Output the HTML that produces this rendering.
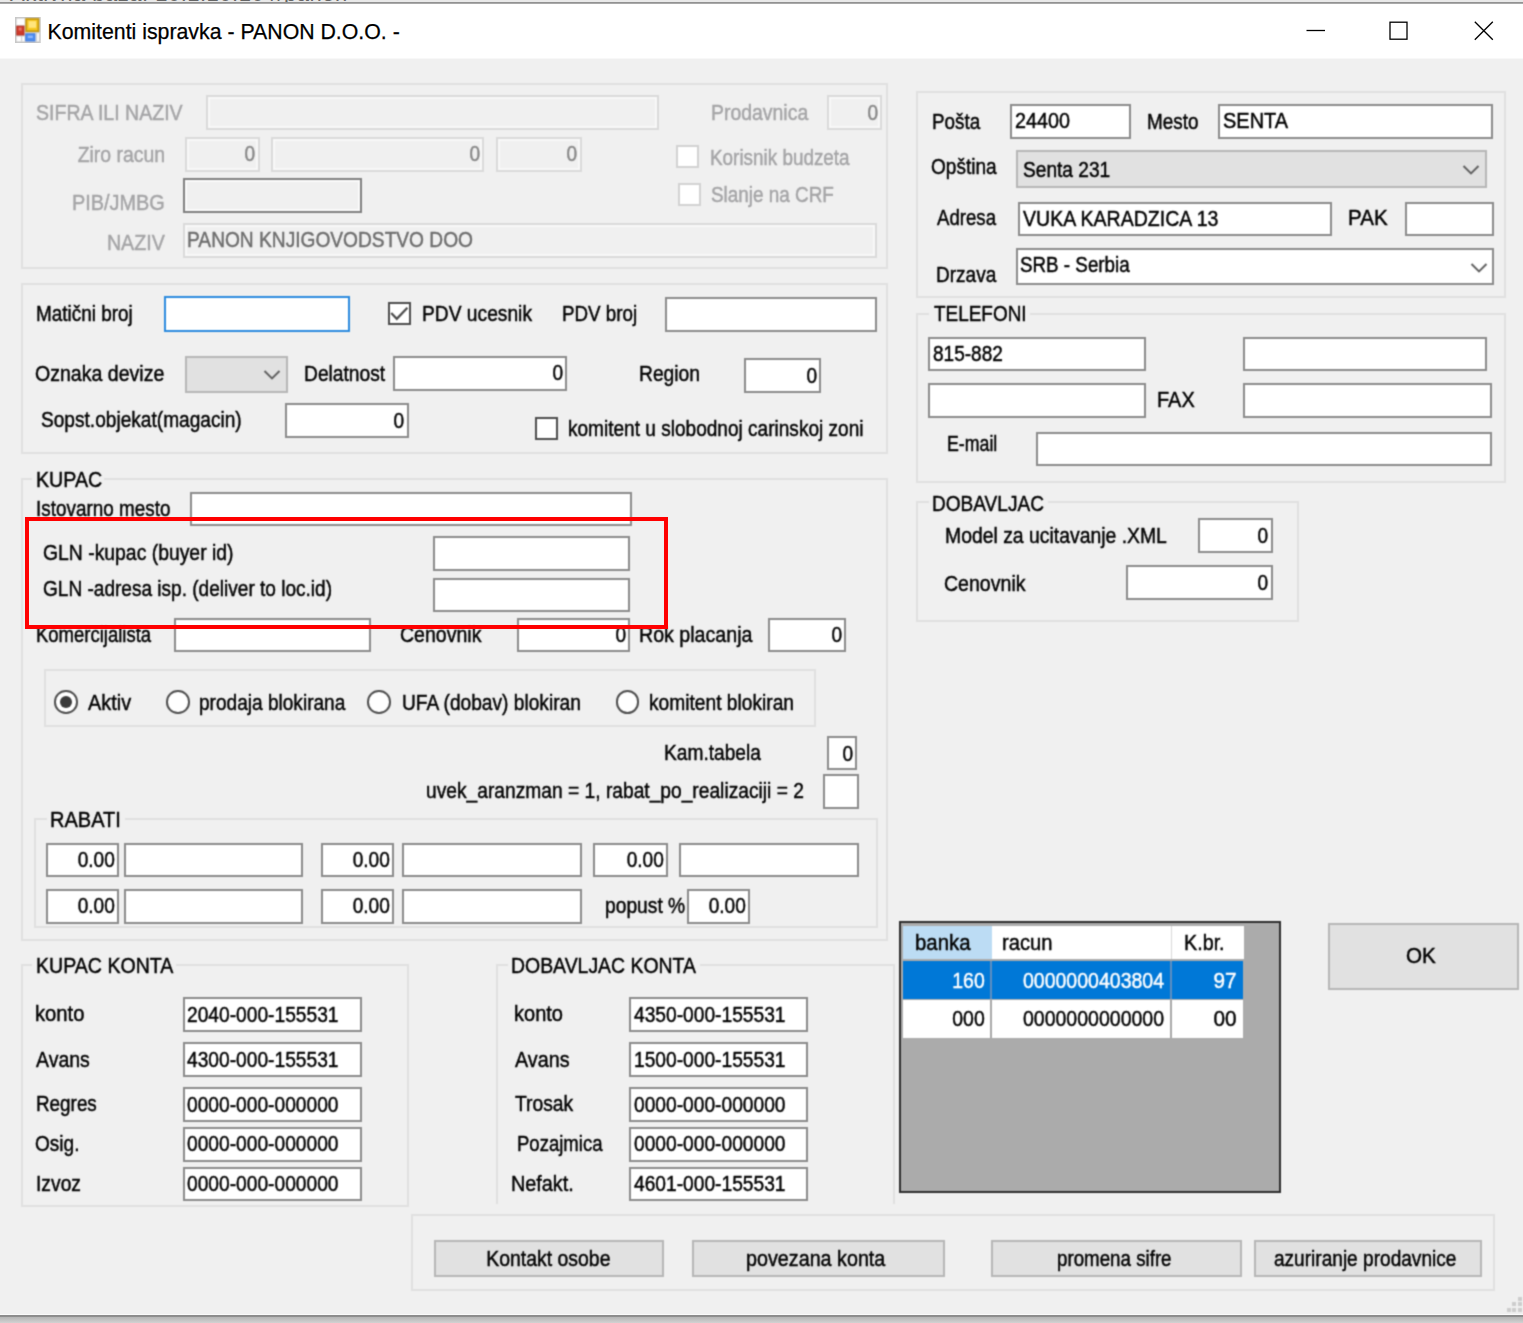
<!DOCTYPE html>
<html lang="sr"><head><meta charset="utf-8"><title>Komitenti ispravka - PANON D.O.O. -</title>
<style>
html,body{margin:0;padding:0}
body{width:1523px;height:1323px;overflow:hidden;position:relative;background:#f0f0f0;font-family:"Liberation Sans",sans-serif}
#top{position:absolute;left:0;top:0;width:1523px;height:3px;background:#e9e9e9;overflow:hidden}
#top span{position:absolute;left:10px;top:-18.3px;font-size:22px;line-height:24px;color:#666;white-space:pre;letter-spacing:.5px}
#topline{position:absolute;left:0;top:2px;width:1523px;height:2px;background:linear-gradient(#9a9a9a,#8a8a8a 50%,#c8c8c8)}
#title{position:absolute;left:0;top:4px;width:1523px;height:54px;background:#fff}
#tl2{position:absolute;left:0;top:58px;width:1523px;height:1px;background:#f8f8f8}
#title .cap{position:absolute;left:47.5px;top:15px;font-size:21.3px;line-height:26px;color:#000;white-space:pre;-webkit-text-stroke:.25px #000}
#in{position:absolute;left:0;top:-58px;width:1523px;height:1323px}
#client{position:absolute;left:0;top:58px;width:1523px;height:1257px;overflow:hidden;background:#f0f0f0;filter:url(#soft)}
.ab{position:absolute}
.g{position:absolute;box-sizing:border-box;border:2px solid #e0e0e0}
.gap{position:absolute;background:#f0f0f0}
.t{position:absolute;white-space:pre;font-size:22px;line-height:24px;color:#000;transform-origin:0 0;-webkit-text-stroke:.45px currentColor}
.t.r{transform-origin:100% 0}
.t.c{transform-origin:50% 0}
.tb{position:absolute;box-sizing:border-box;background:#fff;border:2px solid #8b8b8b}
.tbf{position:absolute;box-sizing:border-box;background:#fff;border:2px solid #2a8ade}
.db{position:absolute;box-sizing:border-box;background:#f0f0f0;border:2px solid #dadada;box-shadow:inset 0 0 0 2px #f8f8f8}
.pb{position:absolute;box-sizing:border-box;background:#f0f0f0;border:2px solid #808080;box-shadow:inset 0 0 0 2px #fafafa}
.cg{position:absolute;box-sizing:border-box;background:#e1e1e1;border:2px solid #b6b6b6}
.bt{position:absolute;box-sizing:border-box;background:#e1e1e1;border:2px solid #b6b6b6}
.cb{position:absolute;box-sizing:border-box;background:#fff;border:2px solid #4d4d4d}
.cbd{position:absolute;box-sizing:border-box;background:#fff;border:2px solid #d2d2d2}
.rd{position:absolute;box-sizing:border-box;background:#fff;border:2px solid #4d4d4d;border-radius:50%}
.rd i{position:absolute;left:50%;top:50%;width:12.4px;height:12.4px;margin:-6.2px 0 0 -6.2px;border-radius:50%;background:#3a3a3a}
.red{position:absolute;box-sizing:border-box;border:4px solid #f00}
.grid{position:absolute;box-sizing:border-box;background:#ababab;border:2px solid #2e2e2e}
#bot1{position:absolute;left:0;top:1314px;width:1523px;height:1px;background:#fafafa}
#bot2{position:absolute;left:0;top:1315px;width:1523px;height:8px;background:linear-gradient(#8a8a8a 0,#8e8e8e 22%,#b6b6b6 30%,#d2d2d2 100%)}
</style></head><body>
<div id="top"><span>Aktivna baza: 10.1.10.10 //panon</span></div><div id="topline"></div>
<div id="title"><svg class="ab" style="left:15px;top:13px;filter:url(#soft)" width="26" height="26" viewBox="0 0 26 26">
<rect x="0.8" y="0.8" width="24" height="24.4" fill="#fff" stroke="#c6c6c6" stroke-width="1.6"/>
<path d="M10.2 1V25M1 8.6H10M1 18.8H10M6.6 19V25M21.6 15V25M10 15.6H25" stroke="#d2d2d2" stroke-width="1.3" fill="none"/>
<rect x="11.2" y="2" width="12.2" height="12.2" fill="#f7c822" stroke="#c79a10" stroke-width="1.8"/>
<rect x="13.6" y="4.2" width="7.6" height="6.6" fill="#ffe57e"/>
<rect x="1.8" y="9.2" width="7.2" height="8.8" fill="#cf3b2b" stroke="#b22c1e" stroke-width="1"/>
<rect x="3.6" y="10.6" width="3" height="3" fill="#e8756a"/>
<rect x="10.8" y="16.8" width="9.2" height="7.2" fill="#4c8df0" stroke="#3f78dc" stroke-width="1"/>
<rect x="12.8" y="18.6" width="5" height="2.4" fill="#8db6ff"/>
</svg><span class="cap">Komitenti ispravka - PANON D.O.O. -</span></div>
<svg class="ab" style="left:1300px;top:14px" width="200" height="34" viewBox="1300 14 200 34">
<path d="M1306.5 30.5H1325" stroke="#000" stroke-width="1.3" fill="none"/>
<rect x="1390" y="22.2" width="17" height="17" fill="none" stroke="#000" stroke-width="1.3"/>
<path d="M1474.8 21.8L1492.8 39.8M1492.8 21.8L1474.8 39.8" stroke="#000" stroke-width="1.3" fill="none"/>
</svg>
<svg width="0" height="0" style="position:absolute"><defs><filter id="soft" x="0" y="0" width="100%" height="100%" color-interpolation-filters="sRGB"><feConvolveMatrix order="3" kernelMatrix="0.04 0.12 0.04 0.12 0.36 0.12 0.04 0.12 0.04" divisor="1" edgeMode="duplicate" preserveAlpha="false"/></filter></defs></svg>
<div id="client"><div id="in">
<div class="g" style="left:21px;top:83px;width:867px;height:186px;"></div>
<div class="db" style="left:206px;top:95px;width:453px;height:35px;"></div>
<div class="db" style="left:185px;top:137px;width:75px;height:35px;"></div>
<div class="db" style="left:271px;top:137px;width:213px;height:35px;"></div>
<div class="db" style="left:496px;top:137px;width:86px;height:35px;"></div>
<div class="pb" style="left:183px;top:178px;width:179px;height:35px;"></div>
<div class="db" style="left:183px;top:223px;width:694px;height:35px;"></div>
<div class="db" style="left:827px;top:95px;width:55px;height:35px;"></div>
<div class="cbd" style="left:676px;top:145px;width:23px;height:23px;"></div>
<div class="cbd" style="left:678px;top:183px;width:23px;height:23px;"></div>
<div class="g" style="left:21px;top:283px;width:867px;height:171px;"></div>
<div class="tbf" style="left:164px;top:296px;width:186px;height:36px;"></div>
<div class="cb" style="left:388px;top:302px;width:23px;height:23px"><svg width="19" height="19" viewBox="0 0 19 19" style="position:absolute;left:0;top:0"><path d="M1.2 9 L6.8 14.8 L17.4 3.8" fill="none" stroke="#4a4a4a" stroke-width="2.2"/></svg></div>
<div class="tb" style="left:665px;top:297px;width:212px;height:35px;"></div>
<div class="cg" style="left:185px;top:356px;width:103px;height:37px;"></div>
<svg class="ab" style="left:262.0px;top:368.3px" width="20" height="14" viewBox="0 0 20 14"><path d="M2.5 3 L10 10.4 L17.5 3" fill="none" stroke="#606060" stroke-width="2"/></svg>
<div class="tb" style="left:393px;top:356px;width:174px;height:35px;"></div>
<div class="tb" style="left:744px;top:358px;width:77px;height:35px;"></div>
<div class="tb" style="left:285px;top:403px;width:124px;height:35px;"></div>
<div class="cb" style="left:535px;top:417px;width:23px;height:23px;"></div>
<div class="g" style="left:21px;top:478px;width:867px;height:463px;"></div>
<div class="gap" style="left:32px;top:477px;width:72px;height:4px"></div>
<div class="tb" style="left:190px;top:492px;width:442px;height:34px;"></div>
<div class="tb" style="left:433px;top:536px;width:197px;height:35px;"></div>
<div class="tb" style="left:433px;top:578px;width:197px;height:34px;"></div>
<div class="tb" style="left:174px;top:618px;width:197px;height:34px;"></div>
<div class="tb" style="left:517px;top:618px;width:113px;height:34px;"></div>
<div class="tb" style="left:768px;top:618px;width:78px;height:34px;"></div>
<div class="g" style="left:44px;top:669px;width:772px;height:58px;"></div>
<div class="rd" style="left:54.3px;top:690.2px;width:23.6px;height:23.6px"><i></i></div>
<div class="rd" style="left:166.1px;top:690.2px;width:23.6px;height:23.6px"></div>
<div class="rd" style="left:367.4px;top:690.2px;width:23.6px;height:23.6px"></div>
<div class="rd" style="left:615.8px;top:690.2px;width:23.6px;height:23.6px"></div>
<div class="tb" style="left:827px;top:736px;width:30px;height:34px;"></div>
<div class="tb" style="left:823px;top:774px;width:36px;height:35px;"></div>
<div class="g" style="left:34px;top:818px;width:844px;height:110px;"></div>
<div class="gap" style="left:47px;top:817px;width:78px;height:4px"></div>
<div class="tb" style="left:46px;top:843px;width:73px;height:34px;"></div>
<div class="tb" style="left:124px;top:843px;width:179px;height:34px;"></div>
<div class="tb" style="left:321px;top:843px;width:73px;height:34px;"></div>
<div class="tb" style="left:402px;top:843px;width:180px;height:34px;"></div>
<div class="tb" style="left:46px;top:889px;width:73px;height:35px;"></div>
<div class="tb" style="left:124px;top:889px;width:179px;height:35px;"></div>
<div class="tb" style="left:321px;top:889px;width:73px;height:35px;"></div>
<div class="tb" style="left:402px;top:889px;width:180px;height:35px;"></div>
<div class="tb" style="left:593px;top:843px;width:75px;height:34px;"></div>
<div class="tb" style="left:679px;top:843px;width:180px;height:34px;"></div>
<div class="tb" style="left:687px;top:889px;width:63px;height:35px;"></div>
<div class="g" style="left:21px;top:964px;width:388px;height:243px;"></div>
<div class="gap" style="left:32px;top:963px;width:144px;height:4px"></div>
<div class="tb" style="left:183px;top:997px;width:179px;height:35px;"></div>
<div class="tb" style="left:183px;top:1042px;width:179px;height:35px;"></div>
<div class="tb" style="left:183px;top:1087px;width:179px;height:35px;"></div>
<div class="tb" style="left:183px;top:1127px;width:179px;height:35px;"></div>
<div class="tb" style="left:183px;top:1167px;width:179px;height:34px;"></div>
<div class="g" style="left:496px;top:964px;width:399px;height:240px;border-bottom:none;"></div>
<div class="gap" style="left:508px;top:963px;width:192px;height:4px"></div>
<div class="tb" style="left:629px;top:997px;width:179px;height:35px;"></div>
<div class="tb" style="left:629px;top:1042px;width:179px;height:35px;"></div>
<div class="tb" style="left:629px;top:1087px;width:179px;height:35px;"></div>
<div class="tb" style="left:629px;top:1127px;width:179px;height:35px;"></div>
<div class="tb" style="left:629px;top:1167px;width:179px;height:34px;"></div>
<div class="g" style="left:916px;top:91px;width:590px;height:207px;"></div>
<div class="tb" style="left:1010px;top:104px;width:121px;height:35px;"></div>
<div class="tb" style="left:1218px;top:104px;width:275px;height:35px;"></div>
<div class="cg" style="left:1016px;top:150px;width:471px;height:38px;"></div>
<svg class="ab" style="left:1461.2px;top:163.0px" width="20" height="14" viewBox="0 0 20 14"><path d="M2.5 3 L10 10.4 L17.5 3" fill="none" stroke="#606060" stroke-width="2"/></svg>
<div class="tb" style="left:1018px;top:202px;width:314px;height:34px;"></div>
<div class="tb" style="left:1405px;top:202px;width:89px;height:34px;"></div>
<div class="tb" style="left:1016px;top:248px;width:478px;height:37px;"></div>
<svg class="ab" style="left:1468.6px;top:260.5px" width="20" height="14" viewBox="0 0 20 14"><path d="M2.5 3 L10 10.4 L17.5 3" fill="none" stroke="#606060" stroke-width="2"/></svg>
<div class="g" style="left:916px;top:313px;width:590px;height:170px;"></div>
<div class="gap" style="left:929px;top:312px;width:101px;height:4px"></div>
<div class="tb" style="left:928px;top:337px;width:218px;height:34px;"></div>
<div class="tb" style="left:1243px;top:337px;width:244px;height:34px;"></div>
<div class="tb" style="left:928px;top:383px;width:218px;height:35px;"></div>
<div class="tb" style="left:1243px;top:383px;width:249px;height:35px;"></div>
<div class="tb" style="left:1036px;top:432px;width:456px;height:34px;"></div>
<div class="g" style="left:916px;top:501px;width:383px;height:121px;"></div>
<div class="gap" style="left:929px;top:500px;width:119px;height:4px"></div>
<div class="tb" style="left:1198px;top:518px;width:75px;height:35px;"></div>
<div class="tb" style="left:1126px;top:565px;width:147px;height:35px;"></div>
<div class="grid" style="left:899px;top:921px;width:382px;height:272px"></div>
<div class="ab" style="left:902.5px;top:926px;width:89.5px;height:33px;background:#bcdcf4"></div>
<div class="ab" style="left:992px;top:926px;width:179px;height:33px;background:#fff"></div>
<div class="ab" style="left:1171px;top:926px;width:73px;height:33px;background:#fff;border-left:1px solid #d8d8d8;box-sizing:border-box"></div>
<div class="ab" style="left:902.5px;top:961px;width:340.5px;height:38px;background:#0078d7"></div>
<div class="ab" style="left:902.5px;top:1000px;width:340.5px;height:38px;background:#fff"></div>
<div class="ab" style="left:990px;top:961px;width:2px;height:38px;background:#5f8fc0"></div>
<div class="ab" style="left:990px;top:1000px;width:2px;height:38px;background:#a8a8a8"></div>
<div class="ab" style="left:1170px;top:961px;width:2px;height:38px;background:#5f8fc0"></div>
<div class="ab" style="left:1170px;top:1000px;width:2px;height:38px;background:#a8a8a8"></div>
<div class="bt" style="left:1328px;top:923px;width:191px;height:67px;"></div>
<div class="g" style="left:411px;top:1214px;width:1084px;height:77px;"></div>
<div class="bt" style="left:434px;top:1240px;width:230px;height:37px;"></div>
<div class="bt" style="left:692px;top:1240px;width:253px;height:37px;"></div>
<div class="bt" style="left:991px;top:1240px;width:251px;height:37px;"></div>
<div class="bt" style="left:1254px;top:1240px;width:228px;height:37px;"></div>
<div class="ab" style="left:1518px;top:1297px;width:4px;height:4px;background:#cdcdcd"></div>
<div class="ab" style="left:1512px;top:1302px;width:4px;height:4px;background:#cdcdcd"></div>
<div class="ab" style="left:1518px;top:1302px;width:4px;height:4px;background:#cdcdcd"></div>
<div class="ab" style="left:1507px;top:1308px;width:4px;height:4px;background:#cdcdcd"></div>
<div class="ab" style="left:1512px;top:1308px;width:4px;height:4px;background:#cdcdcd"></div>
<div class="ab" style="left:1518px;top:1308px;width:4px;height:4px;background:#cdcdcd"></div>
<span class="t" style="left:36.0px;top:101.4px;color:#a4a4a6;transform:scaleX(0.8882)">SIFRA ILI NAZIV</span>
<span class="t r" style="right:1358.4px;top:142.8px;color:#a4a4a6;transform:scaleX(0.8824)">Ziro racun</span>
<span class="t r" style="right:1358.4px;top:190.7px;color:#a4a4a6;transform:scaleX(0.9037)">PIB/JMBG</span>
<span class="t r" style="right:1358.4px;top:231.3px;color:#a4a4a6;transform:scaleX(0.8936)">NAZIV</span>
<span class="t" style="left:710.8px;top:100.9px;color:#a4a4a6;transform:scaleX(0.8830)">Prodavnica</span>
<span class="t" style="left:709.6px;top:145.8px;color:#a4a4a6;transform:scaleX(0.8583)">Korisnik budzeta</span>
<span class="t" style="left:711.3px;top:183.1px;color:#a4a4a6;transform:scaleX(0.8590)">Slanje na CRF</span>
<span class="t r" style="right:1267.5px;top:142.1px;color:#868686;transform:scaleX(0.8680)">0</span>
<span class="t r" style="right:1042.7px;top:142.1px;color:#868686;transform:scaleX(0.8680)">0</span>
<span class="t r" style="right:945.4px;top:142.1px;color:#868686;transform:scaleX(0.8680)">0</span>
<span class="t" style="left:187.4px;top:228.2px;color:#6d6d6d;transform:scaleX(0.8708)">PANON KNJIGOVODSTVO DOO</span>
<span class="t r" style="right:645.2px;top:100.7px;color:#868686;transform:scaleX(0.8680)">0</span>
<span class="t" style="left:36.0px;top:301.9px;transform:scaleX(0.8606)">Matični broj</span>
<span class="t" style="left:421.6px;top:302.1px;transform:scaleX(0.8733)">PDV ucesnik</span>
<span class="t" style="left:561.6px;top:302.1px;transform:scaleX(0.8541)">PDV broj</span>
<span class="t" style="left:34.7px;top:362.2px;transform:scaleX(0.8885)">Oznaka devize</span>
<span class="t" style="left:303.9px;top:362.2px;transform:scaleX(0.8736)">Delatnost</span>
<span class="t r" style="right:960.1px;top:361.1px;transform:scaleX(0.8680)">0</span>
<span class="t" style="left:639.0px;top:362.2px;transform:scaleX(0.8749)">Region</span>
<span class="t r" style="right:706.1px;top:363.6px;transform:scaleX(0.8680)">0</span>
<span class="t" style="left:41.4px;top:408.4px;transform:scaleX(0.8684)">Sopst.objekat(magacin)</span>
<span class="t r" style="right:1118.5px;top:408.5px;transform:scaleX(0.8680)">0</span>
<span class="t" style="left:567.9px;top:417.1px;transform:scaleX(0.8661)">komitent u slobodnoj carinskoj zoni</span>
<span class="t" style="left:35.8px;top:468.4px;transform:scaleX(0.8925)">KUPAC</span>
<span class="t" style="left:35.9px;top:497.0px;transform:scaleX(0.8587)">Istovarno mesto</span>
<span class="t" style="left:43.4px;top:541.1px;transform:scaleX(0.8802)">GLN -kupac (buyer id)</span>
<span class="t" style="left:43.4px;top:577.3px;transform:scaleX(0.8658)">GLN -adresa isp. (deliver to loc.id)</span>
<span class="t" style="left:35.9px;top:622.5px;transform:scaleX(0.8405)">Komercijalista</span>
<span class="t" style="left:400.2px;top:622.5px;transform:scaleX(0.8875)">Cenovnik</span>
<span class="t r" style="right:897.2px;top:623.1px;transform:scaleX(0.8680)">0</span>
<span class="t" style="left:639.0px;top:622.5px;transform:scaleX(0.8916)">Rok placanja</span>
<span class="t r" style="right:681.1px;top:623.1px;transform:scaleX(0.8680)">0</span>
<span class="t" style="left:87.7px;top:691.0px;transform:scaleX(0.9038)">Aktiv</span>
<span class="t" style="left:198.6px;top:691.0px;transform:scaleX(0.8668)">prodaja blokirana</span>
<span class="t" style="left:402.0px;top:691.0px;transform:scaleX(0.8708)">UFA (dobav) blokiran</span>
<span class="t" style="left:648.5px;top:691.0px;transform:scaleX(0.8719)">komitent blokiran</span>
<span class="t" style="left:664.2px;top:740.9px;transform:scaleX(0.8706)">Kam.tabela</span>
<span class="t r" style="right:669.9px;top:741.5px;transform:scaleX(0.8680)">0</span>
<span class="t" style="left:426.4px;top:779.1px;transform:scaleX(0.8729)">uvek_aranzman = 1, rabat_po_realizaciji = 2</span>
<span class="t" style="left:50.1px;top:808.3px;transform:scaleX(0.9097)">RABATI</span>
<span class="t r" style="right:1408.2px;top:848.0px;transform:scaleX(0.8680)">0.00</span>
<span class="t r" style="right:1133.0px;top:848.0px;transform:scaleX(0.8680)">0.00</span>
<span class="t r" style="right:1408.2px;top:894.2px;transform:scaleX(0.8680)">0.00</span>
<span class="t r" style="right:1133.0px;top:894.2px;transform:scaleX(0.8680)">0.00</span>
<span class="t r" style="right:859.0px;top:848.0px;transform:scaleX(0.8680)">0.00</span>
<span class="t" style="left:604.8px;top:894.3px;transform:scaleX(0.8743)">popust %</span>
<span class="t r" style="right:776.7px;top:894.2px;transform:scaleX(0.8680)">0.00</span>
<span class="t" style="left:35.9px;top:954.2px;transform:scaleX(0.8897)">KUPAC KONTA</span>
<span class="t" style="left:34.7px;top:1002.4px;transform:scaleX(0.9196)">konto</span>
<span class="t" style="left:187.4px;top:1002.6px;transform:scaleX(0.8721)">2040-000-155531</span>
<span class="t" style="left:35.9px;top:1047.6px;transform:scaleX(0.8856)">Avans</span>
<span class="t" style="left:187.4px;top:1047.8px;transform:scaleX(0.8721)">4300-000-155531</span>
<span class="t" style="left:35.9px;top:1092.3px;transform:scaleX(0.8573)">Regres</span>
<span class="t" style="left:187.4px;top:1092.5px;transform:scaleX(0.8721)">0000-000-000000</span>
<span class="t" style="left:34.7px;top:1132.2px;transform:scaleX(0.8664)">Osig.</span>
<span class="t" style="left:187.4px;top:1132.4px;transform:scaleX(0.8721)">0000-000-000000</span>
<span class="t" style="left:35.9px;top:1172.1px;transform:scaleX(0.8762)">Izvoz</span>
<span class="t" style="left:187.4px;top:1172.3px;transform:scaleX(0.8721)">0000-000-000000</span>
<span class="t" style="left:511.2px;top:954.2px;transform:scaleX(0.8833)">DOBAVLJAC KONTA</span>
<span class="t" style="left:513.7px;top:1002.4px;transform:scaleX(0.9103)">konto</span>
<span class="t" style="left:633.8px;top:1002.6px;transform:scaleX(0.8721)">4350-000-155531</span>
<span class="t" style="left:514.5px;top:1047.6px;transform:scaleX(0.8971)">Avans</span>
<span class="t" style="left:633.8px;top:1047.8px;transform:scaleX(0.8721)">1500-000-155531</span>
<span class="t" style="left:515.0px;top:1092.3px;transform:scaleX(0.8762)">Trosak</span>
<span class="t" style="left:633.8px;top:1092.5px;transform:scaleX(0.8721)">0000-000-000000</span>
<span class="t" style="left:516.7px;top:1132.2px;transform:scaleX(0.8425)">Pozajmica</span>
<span class="t" style="left:633.8px;top:1132.4px;transform:scaleX(0.8721)">0000-000-000000</span>
<span class="t" style="left:511.2px;top:1172.1px;transform:scaleX(0.9010)">Nefakt.</span>
<span class="t" style="left:633.8px;top:1172.3px;transform:scaleX(0.8721)">4601-000-155531</span>
<span class="t" style="left:932.4px;top:109.6px;transform:scaleX(0.8567)">Pošta</span>
<span class="t" style="left:1015.0px;top:109.4px;transform:scaleX(0.8989)">24400</span>
<span class="t" style="left:1147.0px;top:109.6px;transform:scaleX(0.8595)">Mesto</span>
<span class="t" style="left:1222.7px;top:109.4px;transform:scaleX(0.9077)">SENTA</span>
<span class="t" style="left:931.2px;top:154.5px;transform:scaleX(0.8664)">Opština</span>
<span class="t" style="left:1022.7px;top:158.1px;transform:scaleX(0.8693)">Senta 231</span>
<span class="t" style="left:937.4px;top:206.4px;transform:scaleX(0.8463)">Adresa</span>
<span class="t" style="left:1022.5px;top:207.0px;transform:scaleX(0.8878)">VUKA KARADZICA 13</span>
<span class="t" style="left:1347.8px;top:206.4px;transform:scaleX(0.9342)">PAK</span>
<span class="t" style="left:936.1px;top:262.5px;transform:scaleX(0.8653)">Drzava</span>
<span class="t" style="left:1020.2px;top:253.1px;transform:scaleX(0.8544)">SRB - Serbia</span>
<span class="t" style="left:933.7px;top:302.3px;transform:scaleX(0.8608)">TELEFONI</span>
<span class="t" style="left:933.2px;top:342.4px;transform:scaleX(0.8656)">815-882</span>
<span class="t" style="left:1157.0px;top:388.4px;transform:scaleX(0.9067)">FAX</span>
<span class="t" style="left:946.6px;top:432.1px;transform:scaleX(0.8068)">E-mail</span>
<span class="t" style="left:932.4px;top:491.5px;transform:scaleX(0.8662)">DOBAVLJAC</span>
<span class="t" style="left:945.4px;top:523.9px;transform:scaleX(0.8809)">Model za ucitavanje .XML</span>
<span class="t r" style="right:254.5px;top:523.8px;transform:scaleX(0.8680)">0</span>
<span class="t" style="left:943.6px;top:571.8px;transform:scaleX(0.8886)">Cenovnik</span>
<span class="t r" style="right:254.5px;top:570.7px;transform:scaleX(0.8680)">0</span>
<span class="t" style="left:914.6px;top:930.5px;transform:scaleX(0.9257)">banka</span>
<span class="t" style="left:1002.3px;top:930.5px;transform:scaleX(0.9174)">racun</span>
<span class="t" style="left:1184.0px;top:930.5px;transform:scaleX(0.8972)">K.br.</span>
<span class="t r" style="right:538.6px;top:968.6px;color:#fff;transform:scaleX(0.8824)">160</span>
<span class="t r" style="right:359.0px;top:968.6px;color:#fff;transform:scaleX(0.8871)">0000000403804</span>
<span class="t r" style="right:286.2px;top:968.6px;color:#fff;transform:scaleX(0.9435)">97</span>
<span class="t r" style="right:538.6px;top:1007.3px;transform:scaleX(0.8824)">000</span>
<span class="t r" style="right:359.0px;top:1007.3px;transform:scaleX(0.8871)">0000000000000</span>
<span class="t r" style="right:286.2px;top:1007.3px;transform:scaleX(0.9435)">00</span>
<span class="t c" style="left:1404.9px;top:944.2px;transform:scaleX(0.9372)">OK</span>
<span class="t c" style="left:477.8px;top:1246.8px;transform:scaleX(0.8836)">Kontakt osobe</span>
<span class="t c" style="left:737.7px;top:1246.8px;transform:scaleX(0.8967)">povezana konta</span>
<span class="t c" style="left:1047.4px;top:1246.8px;transform:scaleX(0.8519)">promena sifre</span>
<span class="t c" style="left:1259.8px;top:1246.8px;transform:scaleX(0.8676)">azuriranje prodavnice</span>
</div></div>
<div class="red" style="left:25px;top:517px;width:643px;height:112px"></div>
<div id="tl2"></div><div id="bot1"></div><div id="bot2"></div>
</body></html>
